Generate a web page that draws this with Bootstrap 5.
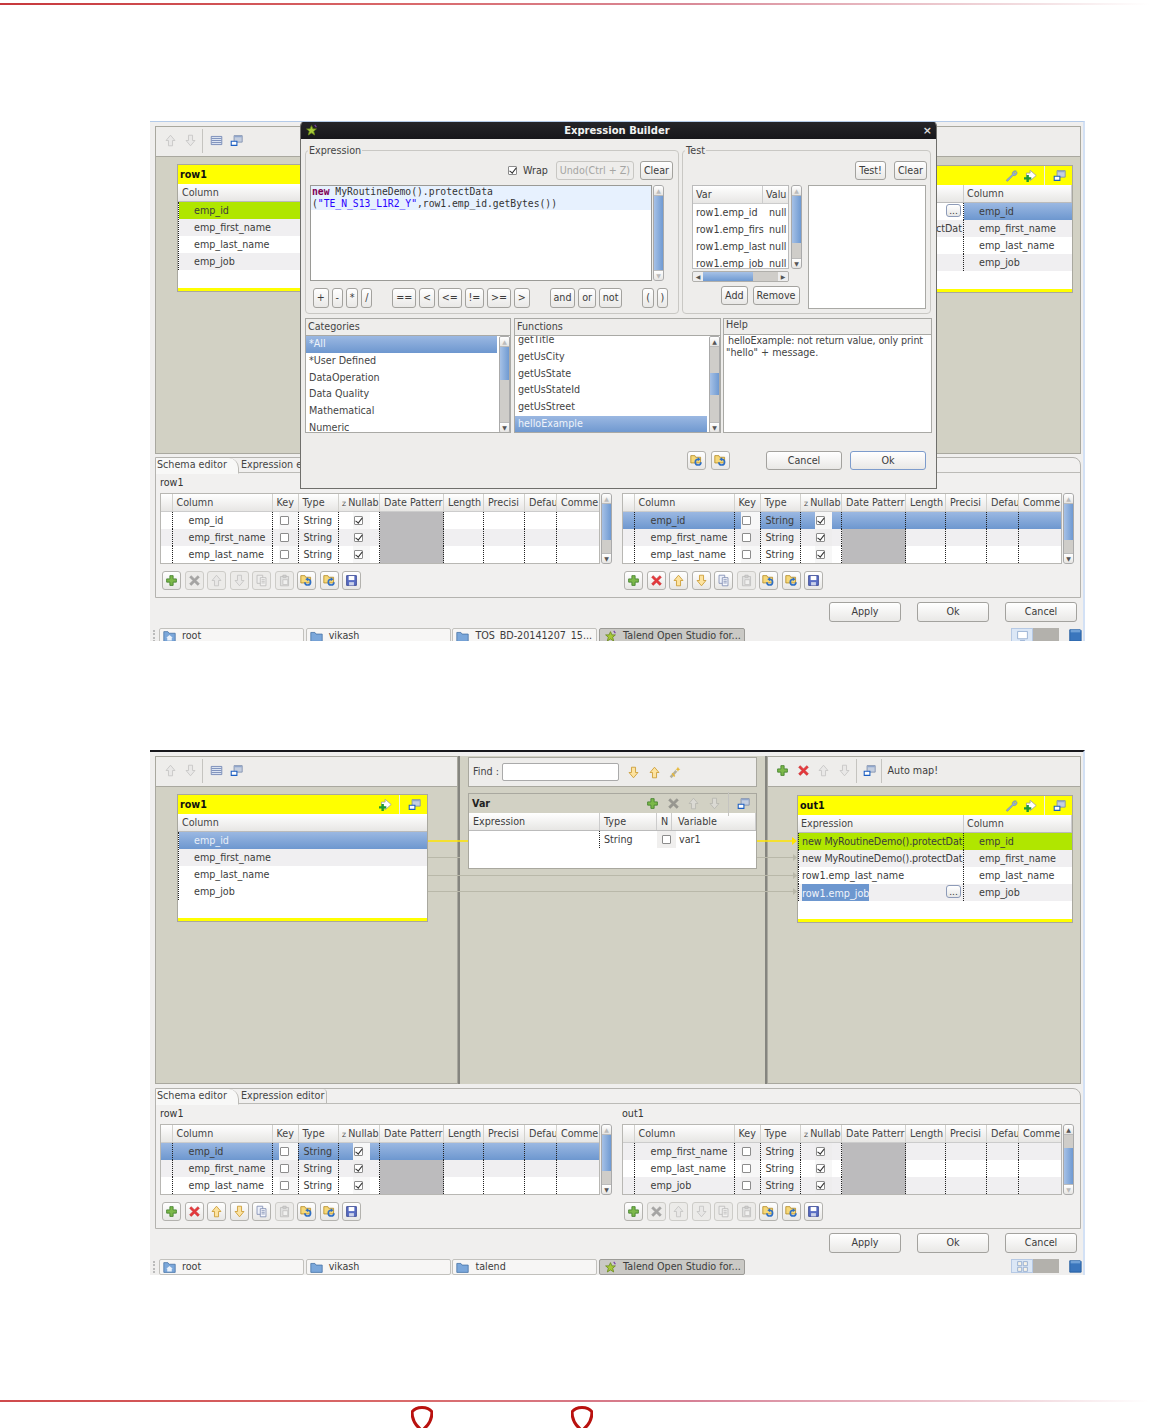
<!DOCTYPE html>
<html lang="en">
<head>
<meta charset="utf-8">
<title>Expression Builder</title>
<link href="https://cdn.jsdelivr.net/npm/bootstrap@5.3.0/dist/css/bootstrap.min.css" rel="stylesheet">
<style>
html,body{height:1428px;overflow:hidden}
body{margin:0;background:#fff;font:9.6px/1.2 "DejaVu Sans",sans-serif;color:#3c3c3c}
.ruleline{height:2px;background:linear-gradient(90deg,#c7383c,#d9686a 35%,#d98a98 60%,#f3dfe2 90%,#fff)}
.ruleline.top{margin-top:3px}
.ruleline.bot{margin-top:125px;background:linear-gradient(90deg,#cf4a4c,#d96a6a 35%,#d68095 60%,#f0d4da 88%,#fff)}
.logos{margin:4px 0 0 411px;gap:138px}
.logos svg{width:22px;height:26px}
.shot{position:relative;margin-left:150px;width:935px;overflow:hidden;background:#f0efee;border-right:2px solid #d3e1f5}
.shot-a{margin-top:116px;height:520px;padding-top:4px;border-top:1px solid #b4cbe9}
.shot-b{margin-top:109px;height:525px;padding-top:4px;border-top:2px solid #17171c}
.mapper{margin-left:5px;width:926px;height:328px}
.pane{background:#d2d1c4;border:1px solid #a9a89f;height:328px}
.pane-l{width:303px}
.pane-m{width:305px;padding:0 8px;border-width:0}
.pane-r{width:314px}
.vdiv{width:2px;background:#85857f}
.tbar{height:30px;padding-bottom:2px;background:#eeedeb;border-bottom:1px solid #a9a89f;padding-left:8px;gap:7px}
.tbar-r{gap:7.5px}
.vsep{width:1px;height:24px;background:#c5c4c0;margin:0 0 0 -2px}
.tbar-r .vsep{margin:0 -2px}
.ic{width:13px;height:13px;flex:none;display:block}
.dis{filter:grayscale(1) opacity(.5)}
.card.mcard{--bs-card-border-radius:0;--bs-card-bg:#fff;display:block;border:1px solid #a9a89f;border-radius:0;height:128px;overflow:hidden;color:#3c3c3c}
.mc-l{margin:7px 0 0 21px;width:251px}
.mc-r{margin:8px 0 0 29px;width:276px}
.mc-head{height:19px;background:#ff0;padding:0 6.5px 0 2px;font-weight:700;color:#111;gap:7.5px}
.mc-head .vsep{height:19px;background:#eee;margin:0}
.wr{margin-right:-2px}
.mc-col{height:18px;line-height:17px;background:linear-gradient(#fff,#e7e6e4);border-bottom:1px solid #bbb;padding-left:4px;color:#444}
.mc-col.xp-grid{padding-left:0}
.mc-rows{height:68px;border-left:1px dotted #222}
.mc-rw{height:17px;line-height:17px;padding-left:15px;white-space:nowrap}
.mc-yel{height:3px;margin-top:18px;background:#ff0}
.alt{background:#f0eff1}
.grn{background:#b0e600}
.sel{background:linear-gradient(#9bb8e2,#6d97cf)}
.sel.lt{color:#e9eff8}
.xp-grid{display:grid;grid-template-columns:166px 1fr}
.xp-h{border-right:1px solid #ccc;padding-left:3px}
.xp-c{height:17px;line-height:17px;padding-left:3px;white-space:nowrap;overflow:hidden;border-right:1px dotted #222;border-left:1px dotted #222}
.xp-c.rt{text-align:right;padding-right:1px}
.xp-c.tt{letter-spacing:-.12px}
.mc-cell{height:17px;line-height:17px;padding-left:15px}
.dots.btn{width:15px;height:13px;padding:0;font-size:9px;line-height:8px;border:1px solid #8d9bb8;border-radius:3px;background:linear-gradient(#fff,#e6e6e6);color:#333;margin:1px 2px 0 auto;display:block}
.hl{background:#6d97cf;color:#f2f5fb;padding:1px 0}
.find{height:30px;background:#eeedeb;border:1px solid #a9a89f;padding-left:4px;margin-top:1px;color:#444}
.find input.form-control{width:117px;height:18px;min-height:0;border:1px solid #aaa;border-radius:2px;padding:0;margin:0 8px 0 3px}
.find .ic{margin-right:8px}
.vbox{margin-top:6px;height:76px;background:#fff;border:1px solid #a9a89f}
.vb-head{height:19px;background:#d2d1c4;font-weight:700;color:#222;padding:0 6.5px 0 3px;gap:7.5px}
.vb-head .vsep{margin:0}
.vb-cols{display:grid;grid-template-columns:131px 57px 15px 1fr;height:18px;line-height:17px;background:linear-gradient(#fff,#e7e6e4);border-bottom:1px solid #bbb}
.vb-cols span{border-right:1px solid #ccc;padding-left:4px;overflow:hidden}
.vb-cols span:last-child{padding-left:6px}
.vb-row{display:grid;grid-template-columns:131px 57px 19px 1fr;height:17px;line-height:17px}
.vb-row span:first-child{border-right:1px dotted #222}
.vb-row span:nth-child(2){padding-left:4px}
.vb-row .kc{background:#f0efee}
.vn{padding-left:3px}
.wires{position:absolute;left:0;top:0;width:935px;height:525px;pointer-events:none}
.schema{margin:3px 0 0 5px;width:926px;height:141px;border:1px solid #b4b3af;border-radius:0 8px 0 0;background:#f1f0ef}
.shot-b .schema{margin-top:4px}
.nav.stabs{height:15px;border-bottom:1px solid #bcbbb7;flex-wrap:nowrap}
.stabs .nav-link{padding:0;height:15px;line-height:14px;color:#444;font-size:9.6px;white-space:nowrap}
.stabs .nav-link.active{width:83px;padding-left:1px;background:#f8f8f7;border-right:1px solid #bcbbb7;border-bottom:1px solid #f8f8f7;height:16px;border-radius:0 10px 0 0}
.stabs .nav-link.other{margin-left:1px;width:87px;padding-left:1px;border-right:1px solid #bcbbb7;border-radius:0 4px 0 0}
.sch-lbl{height:20px;line-height:20px;color:#333}
.sch-wrap{padding-left:4px;gap:10px}
.sch-side{width:452px}
.tgrid{width:441px;height:71px;overflow:hidden;background:#fff;border:1px solid #b8b7b3}
.thd,.trw{display:grid;grid-template-columns:11.5px 100px 26px 40.5px 41px 64px 40px 41px 32px 43px}
.thd{height:18px;line-height:17px;background:linear-gradient(#fff,#e7e6e4);border-bottom:1px solid #ccc;color:#444}
.thd span{border-right:1px solid #d2d1cd;padding-left:4px;white-space:nowrap;overflow:hidden}
.thd .nl{padding-left:3px}
.thd .nl small{font-size:6px;margin-right:2px}
.trw{height:17px;line-height:17px}
.trw>span{border-right:1px dotted #222;white-space:nowrap;overflow:hidden}
.trw>span:last-child{border-right:0}
.nmc{padding-left:16px}
.tyc{padding-left:5px}
.trw>.kcell{background:linear-gradient(#eeedee,#eeedee) 6px 0/19px 100% no-repeat;display:flex;align-items:center;padding-left:7px}
.trw>.ncell{background:linear-gradient(#eeedee,#eeedee) 14px 0/17px 100% no-repeat;display:flex;align-items:center;padding-left:14.500px}
.trw.white>.kcell,.trw.white>.ncell,.sel>.kcell,.sel>.ncell{background-image:linear-gradient(#f7f7f7,#f7f7f7)}
.dpc{background:#bcbbbd}
.sel .dpc{background:none}
.ck{display:block;width:9px;height:9px;border:1px solid #8c8c8c;border-radius:1px;background:#fff;flex:none}
.ck.on::after{content:"";display:block;width:3.5px;height:7px;margin:-1px 0 0 2.5px;border:solid #333;border-width:0 1.3px 1.3px 0;transform:rotate(38deg)}
.wrapck{margin-right:6px}
.sbar{width:11px;flex:none;background:#cfcdc9;border:1px solid #aaa;border-radius:3px;overflow:hidden;display:flex;flex-direction:column;justify-content:space-between}
.sbar-h{margin-left:1px}
.thumb{display:block;width:100%;background:linear-gradient(90deg,#a6c1e6,#6f9ad2);border:0;margin-bottom:auto}
.sb-a{display:block;height:10px;flex:none;background:linear-gradient(#fff,#e6e5e3);color:#555;font-size:6px;line-height:9px;text-align:center;border-bottom:1px solid #bbb}
.sb-a.end{border-top:1px solid #bbb;border-bottom:0}
.sb-a.off{color:#bbb}
.itools{margin:7px 0 0 2px;gap:3.5px}
.ibtn.btn{width:19px;height:19px;padding:0;border:1px solid #b3b2ae;border-radius:3px;background:linear-gradient(#fff,#e8e7e5);display:flex;align-items:center;justify-content:center}
.ibtn.off.btn{background:#ecebe9;border-color:#cdccc8;opacity:1}
.actions{height:30px;padding:4px 6px 0 0;gap:16px}
.gbtn.btn{font-size:9.6px;line-height:1;padding:0 3px;height:19px;border:1px solid #a3a29e;border-radius:3px;background:linear-gradient(#fff,#e9e8e6);color:#3c3c3c;white-space:nowrap;display:flex;align-items:center;justify-content:center}
.gbtn.off.btn{color:#a5a5a3;border-color:#c8c7c3;background:#eeedeb;opacity:1}
.bw72.btn{width:72px;height:20px}
.bw76.btn{width:76px}
.blue.btn{border-color:#7d9ccc}
.taskbar{height:16px;padding-left:9px;gap:1.7px;background:#f0efee;position:relative}
.tk.btn{width:145px;height:16px;padding:0 0 0 3px;font-size:9.6px;line-height:1;border:1px solid #c2c1bd;border-radius:2px;background:#f7f6f5;color:#3c3c3c;display:flex;align-items:center;gap:6px;white-space:nowrap;overflow:hidden}
.tk.on.btn{background:#cac9c5;width:146px;border-color:#9c9b97;padding-left:4px}
.tk-r{margin-left:auto;padding-right:1px;height:16px}
.pg1{width:22px;height:14px;background:#dbe7f6;border:1px solid #b6c9e4;display:flex;justify-content:center;align-items:center}
.pg2{width:26px;height:14px;background:#b3b1ac;margin-right:9px}
.tk-r .tr{width:14px;height:14px}
.dlg{position:absolute;left:150px;top:-1px;width:637px;height:368px;background:#eeedeb;border:1px solid #6f6f6b;border-top:0;border-radius:5px 5px 0 0;overflow:hidden}
.dlg-tt{height:18px;background:linear-gradient(#26262a,#17171b);color:#f2f2f2;font-weight:700;text-align:center;padding:0 4px}
.dlg-tt b{flex:1;font-size:10px;padding:2px 7px 0 0}
.dlg-x{color:#ddd;font-size:11px;font-weight:700;line-height:1}
.fsets{margin:11px 0 0 4px;gap:3px}
.fset{height:164px;border:1px solid #c9c8c4;border-radius:4px}
.f1{width:374px}.f2{width:249px}
.lgd{display:table;margin:-6px 0 0 2px;padding:0 1px;background:#eeedeb;color:#444;line-height:11px}
.fbar{height:19px;margin-top:5px;padding-right:5px}
.f2 .fbar{padding-right:3px}
.undo{margin:0 6px 0 8px;width:78px}
.edrow{margin:5px 0 0 4px;height:96px;gap:1px}
.editor{width:342px;background:#fff;border:1px solid #9a9a96;font:9.7px/12px "DejaVu Sans Mono",monospace;color:#333}
.edhl{background:#e7f1fe;height:24px;padding-left:1px;overflow:hidden}
.edhl div{height:12px;white-space:nowrap}
.kw{color:#7f0055;font-weight:700}
.st{color:#2a00ff}
.oprow{margin:7px 0 0 7px;gap:3px}
.oprow .btn.gbtn{height:20px;padding:0 2.85px}
.gp{margin-left:17px}
.f2body{margin:5px 0 0 9px;gap:6px}
.vt-wrap{width:110px}
.vt-top{gap:2px;height:84px}
.vt{width:97px;height:84px;overflow:hidden;background:#fff;border:1px solid #bbb}
.vt-h{display:grid;grid-template-columns:70px 1fr;height:18px;line-height:17px;background:linear-gradient(#fff,#e7e6e4);border-bottom:1px solid #ccc}
.vt-h span{padding-left:3px;overflow:hidden;white-space:nowrap}
.vt-h span:first-child{border-right:1px solid #ccc}
.vt-r{display:grid;grid-template-columns:73px 1fr;height:17px;line-height:17px}
.vt-r span{padding-left:3px;overflow:hidden;white-space:nowrap}
.hbar{width:97px;height:11px;margin-top:2px;background:#cfcdc9;border:1px solid #b0afab;border-radius:2px;overflow:hidden}
.hb-a{width:10px;background:#eee;font-size:6px;line-height:9px;text-align:center;color:#555}
.hb-t{width:50px;background:linear-gradient(#a6c1e6,#6f9ad2)}
.hb-e{margin-left:auto}
.addrow{margin:4px 0 0 29px;gap:5px}
.result{width:118px;height:124px;background:#fff;border:1px solid #a9a9a5}
.lists{margin:4px 0 0 4px;gap:3px;height:115px}
.lpanel{border:1px solid #a9a9a5;background:#fff;height:115px;overflow:hidden}
.lp-c{width:206px}.lp-f{width:207px;margin-right:-1px}.lp-h{width:209px}
.lp-hd{height:17px;line-height:16px;background:#eeedeb;border-bottom:1px solid #a9a9a5;padding-left:2px;color:#444}
.lp-h .lp-hd{height:16px;line-height:12px}
.lp-body{height:97px;overflow:hidden}
.list-group.plist{--bs-list-group-border-width:0;--bs-list-group-item-padding-x:3px;--bs-list-group-item-padding-y:0;--bs-list-group-color:#444;--bs-list-group-bg:transparent;flex:1;border-radius:0;min-width:0;font-size:9.6px}
.plist .list-group-item{height:16.8px;line-height:16.8px;white-space:nowrap;flex:none}
.plist .list-group-item.on{background:linear-gradient(#9bb8e2,#6d97cf);color:#eef3fa}
.pl-scr{margin-top:-4px}
.lp-body .sbar{margin-left:2px;border-radius:2px}
.helpbox{padding:0 2px;line-height:12px;color:#444}
.helpbox i{font-style:normal;padding-left:2px;letter-spacing:-.13px;white-space:nowrap}
.dlg-ft{margin-top:18px;padding-right:10px;gap:5px}
.dlg-ft .sp{width:26px}
.gap8{margin-left:3px}
.grip{position:absolute;left:3px;top:2px;width:4px;height:12px;border-left:2px dotted #bbb}
</style>
</head>
<body>
<svg width="0" height="0" class="position-absolute" aria-hidden="true">
<symbol id="i-plus" viewBox="0 0 16 16"><path d="M6 2h4v4h4v4h-4v4H6v-4H2V6h4z" fill="#7cb84a" stroke="#3f7f2a"/></symbol>
<symbol id="i-x" viewBox="0 0 16 16"><path d="M4 2 8 6l4-4 2 2-4 4 4 4-2 2-4-4-4 4-2-2 4-4-4-4z" fill="#e5383c" stroke="#c42a2a" stroke-width=".7"/></symbol>
<symbol id="i-up" viewBox="0 0 16 16"><path d="M8 1.500 13.500 8h-3v6.500h-5V8h-3z" fill="#fde3a0" stroke="#c9982c"/></symbol>
<symbol id="i-down" viewBox="0 0 16 16"><path d="M8 14.500 13.500 8h-3V1.500h-5V8h-3z" fill="#fde3a0" stroke="#c9982c"/></symbol>
<symbol id="i-copy" viewBox="0 0 16 16"><path d="M2.500 1.500h7v10h-7z" fill="#eef2fa" stroke="#7c8ab0"/><path d="M6.500 4.500h7v10h-7z" fill="#f6f8fd" stroke="#7c8ab0"/><path d="M8 7h4M8 9h4M8 11h4" stroke="#7c8ab0"/></symbol>
<symbol id="i-paste" viewBox="0 0 16 16"><path d="M3 3h10v11.500H3z" fill="#d5d5d2" stroke="#909090"/><path d="M6 1.500h4V4H6z" fill="#bbb" stroke="#888"/><path d="M6 7h6v6H6z" fill="#f4f4f4" stroke="#999"/></symbol>
<symbol id="i-imp" viewBox="0 0 16 16"><path d="M1 2h5l1 2h6v7H1z" fill="#f6d878" stroke="#b58a24"/><path d="M6 10a3.500 3.500 0 1 0 3.500-3.500" fill="none" stroke="#2f6fc4" stroke-width="2"/><path d="M10 4v5L6.500 6.500z" fill="#2f6fc4"/></symbol>
<symbol id="i-exp" viewBox="0 0 16 16"><path d="M1 2h5l1 2h6v7H1z" fill="#f6d878" stroke="#b58a24"/><path d="M13.500 10a3.500 3.500 0 1 1-3.500-3.500" fill="none" stroke="#2f6fc4" stroke-width="2"/><path d="M9.500 4v5L13 6.500z" fill="#2f6fc4"/></symbol>
<symbol id="i-save" viewBox="0 0 16 16"><path d="M2 2h12v12H2z" fill="#5a6ec4" stroke="#2f3d8c"/><path d="M4.500 2.500h7v5h-7z" fill="#fff"/><path d="M5 10h6v4H5z" fill="#cbd2ea"/></symbol>
<symbol id="i-win" viewBox="0 0 16 16"><path d="M5 2h10v8H5z" fill="#c4cedf" stroke="#7b8cab"/><path d="M5.500 2.500h9v1.500h-9z" fill="#8fa6cc"/><path d="M1.500 9h7v5h-7z" fill="#fff" stroke="#1b5ec2" stroke-width="1.300"/></symbol>
<symbol id="i-tbl" viewBox="0 0 16 16"><path d="M1.500 3h13v10h-13z" fill="#dde5f2" stroke="#6a7fb0"/><path d="M2 5.500h12M2 8h12M2 10.500h12" stroke="#6a7fb0"/></symbol>
<symbol id="i-wrench" viewBox="0 0 16 16"><path d="M14 2.500a3.600 3.600 0 0 0-5 4.300L2 13.200c-.8 1.300.5 2.400 1.600 1.600L10 8a3.600 3.600 0 0 0 4.600-4.600l-2.300 2.100-1.500-1.400z" fill="#93acd6" stroke="#6e88b8" stroke-width=".7"/></symbol>
<symbol id="i-arrp" viewBox="0 0 16 16"><path d="M7.500 1.500 15 8l-7.500 6.500V11H3V5h4.500z" fill="#fff" stroke="#a0a0a0"/><path d="M3 7.500h3V10h3v3H6v3H3v-3H0v-3h3z" fill="#1f9a33"/></symbol>
<symbol id="i-wand" viewBox="0 0 16 16"><path d="M2 14 9 6" stroke="#b3b09c" stroke-width="3"/><path d="M4 9l3 4" stroke="#e7b93a" stroke-width="2"/><path d="M11 1l1 2 2 1-2 1-1 2-1-2-2-1 2-1z" fill="#e7b93a"/></symbol>
<symbol id="i-star" viewBox="0 0 16 16"><path d="M8 2l1.800 4H14l-3.300 2.900 1.200 4.600L8 11l-3.900 2.500 1.200-4.600L2 6h4.200z" fill="#a6c838" stroke="#6a8a1c"/><path d="M12 1l2 3" stroke="#7a3fa8" stroke-width="1.500"/></symbol>
<symbol id="i-folder" viewBox="0 0 16 16"><path d="M1 3h5l1.500 2H15v9H1z" fill="#7ba7da" stroke="#4a75a8"/></symbol>
<symbol id="i-home" viewBox="0 0 16 16"><path d="M1 2h5l1.500 2H15v10H1z" fill="#7ba7da" stroke="#4a75a8"/><path d="M8 6l4 3.500h-1.200V13H5.200V9.500H4z" fill="#eaf1fa"/></symbol>
<symbol id="i-trash" viewBox="0 0 16 16"><path d="M2 2h12l1 1v12H2z" fill="#3a76bd" stroke="#215a9e"/><path d="M3 2h11v3H3z" fill="#6fa0d6"/></symbol>
<symbol id="i-mon" viewBox="0 0 16 16"><path d="M2 3h12v9H2z" fill="#fff" stroke="#8da6cc"/><path d="M5 14h6" stroke="#8da6cc"/></symbol>
<symbol id="i-grid" viewBox="0 0 16 16"><path d="M2 2h5v5H2zM9 2h5v5H9zM2 9h5v5H2zM9 9h5v5H9z" fill="#f7f3e8" stroke="#8da6cc"/></symbol>
</svg>

<div class="ruleline top"></div>

<!-- first screenshot -->
<section class="shot shot-a">
  <div class="mapper d-flex">
    <div class="pane pane-l">
      <div class="tbar d-flex align-items-center">
        <svg class="ic dis"><use href="#i-up"/></svg><svg class="ic dis"><use href="#i-down"/></svg>
        <span class="vsep"></span>
        <svg class="ic"><use href="#i-tbl"/></svg><svg class="ic"><use href="#i-win"/></svg>
      </div>
      <div class="card mcard mc-l">
        <div class="mc-head d-flex align-items-center"><span>row1</span></div>
        <div class="mc-col">Column</div>
        <div class="mc-rows">
          <div class="mc-rw grn">emp_id</div><div class="mc-rw alt">emp_first_name</div><div class="mc-rw">emp_last_name</div><div class="mc-rw alt">emp_job</div>
        </div>
        <div class="mc-yel"></div>
      </div>
    </div>
    <div class="vdiv"></div>
    <div class="pane pane-m"></div>
    <div class="vdiv"></div>
    <div class="pane pane-r">
      <div class="tbar d-flex align-items-center"></div>
      <div class="card mcard mc-r">
        <div class="mc-head d-flex align-items-center"><span class="me-auto"></span><svg class="ic wr"><use href="#i-wrench"/></svg><svg class="ic"><use href="#i-arrp"/></svg><span class="vsep"></span><svg class="ic"><use href="#i-win"/></svg></div>
        <div class="mc-col xp-grid"><span class="xp-h"></span><span class="xp-h">Column</span></div>
        <div class="xp-grid">
          <div class="xp-c"><button class="btn dots">...</button></div><div class="mc-cell sel">emp_id</div>
          <div class="xp-c alt rt">ctDat</div><div class="mc-cell alt">emp_first_name</div>
          <div class="xp-c"></div><div class="mc-cell">emp_last_name</div>
          <div class="xp-c alt"></div><div class="mc-cell alt">emp_job</div>
        </div>
        <div class="mc-yel"></div>
      </div>
    </div>
  </div>

  <div class="schema">
    <ul class="nav stabs">
      <li class="nav-item"><a class="nav-link active" href="#">Schema editor</a></li>
      <li class="nav-item"><a class="nav-link other" href="#">Expression e</a></li>
    </ul>
    <div class="sch-wrap d-flex">
      <div class="sch-side">
        <div class="sch-lbl">row1</div>
        <div class="d-flex gap-0">
          <div class="tgrid">
            <div class="thd"><span></span><span>Column</span><span>Key</span><span>Type</span><span class="nl"><small>Z</small>Nullab</span><span>Date Patterr</span><span>Length</span><span>Precisi</span><span>Defau</span><span>Comme</span></div>
            <div class="trw white"><span></span><span class="nmc">emp_id</span><span class="kcell"><b class="ck"></b></span><span class="tyc">String</span><span class="ncell"><b class="ck on"></b></span><span class="dpc"></span><span></span><span></span><span></span><span></span></div>
            <div class="trw alt"><span></span><span class="nmc">emp_first_name</span><span class="kcell"><b class="ck"></b></span><span class="tyc">String</span><span class="ncell"><b class="ck on"></b></span><span class="dpc"></span><span></span><span></span><span></span><span></span></div>
            <div class="trw white"><span></span><span class="nmc">emp_last_name</span><span class="kcell"><b class="ck"></b></span><span class="tyc">String</span><span class="ncell"><b class="ck on"></b></span><span class="dpc"></span><span></span><span></span><span></span><span></span></div>
          </div>
          <div class="sbar sbar-h"><span class="sb-a off">&#9650;</span><span class="thumb" style="height:36px"></span><span class="sb-a end">&#9660;</span></div>
        </div>
        <div class="itools d-flex">
          <button class="btn ibtn"><svg class="ic"><use href="#i-plus"/></svg></button><button class="btn ibtn off"><svg class="ic dis"><use href="#i-x"/></svg></button><button class="btn ibtn off"><svg class="ic dis"><use href="#i-up"/></svg></button><button class="btn ibtn off"><svg class="ic dis"><use href="#i-down"/></svg></button><button class="btn ibtn off"><svg class="ic dis"><use href="#i-copy"/></svg></button><button class="btn ibtn off"><svg class="ic dis"><use href="#i-paste"/></svg></button><button class="btn ibtn"><svg class="ic"><use href="#i-imp"/></svg></button><button class="btn ibtn"><svg class="ic"><use href="#i-exp"/></svg></button><button class="btn ibtn"><svg class="ic"><use href="#i-save"/></svg></button>
        </div>
      </div>
      <div class="sch-side">
        <div class="sch-lbl"></div>
        <div class="d-flex">
          <div class="tgrid">
            <div class="thd"><span></span><span>Column</span><span>Key</span><span>Type</span><span class="nl"><small>Z</small>Nullab</span><span>Date Patterr</span><span>Length</span><span>Precisi</span><span>Defau</span><span>Comme</span></div>
            <div class="trw sel"><span></span><span class="nmc">emp_id</span><span class="kcell"><b class="ck"></b></span><span class="tyc">String</span><span class="ncell"><b class="ck on"></b></span><span class="dpc"></span><span></span><span></span><span></span><span></span></div>
            <div class="trw alt"><span></span><span class="nmc">emp_first_name</span><span class="kcell"><b class="ck"></b></span><span class="tyc">String</span><span class="ncell"><b class="ck on"></b></span><span class="dpc"></span><span></span><span></span><span></span><span></span></div>
            <div class="trw white"><span></span><span class="nmc">emp_last_name</span><span class="kcell"><b class="ck"></b></span><span class="tyc">String</span><span class="ncell"><b class="ck on"></b></span><span class="dpc"></span><span></span><span></span><span></span><span></span></div>
          </div>
          <div class="sbar sbar-h"><span class="sb-a off">&#9650;</span><span class="thumb" style="height:36px"></span><span class="sb-a end">&#9660;</span></div>
        </div>
        <div class="itools d-flex">
          <button class="btn ibtn"><svg class="ic"><use href="#i-plus"/></svg></button><button class="btn ibtn"><svg class="ic"><use href="#i-x"/></svg></button><button class="btn ibtn"><svg class="ic"><use href="#i-up"/></svg></button><button class="btn ibtn"><svg class="ic"><use href="#i-down"/></svg></button><button class="btn ibtn"><svg class="ic"><use href="#i-copy"/></svg></button><button class="btn ibtn off"><svg class="ic dis"><use href="#i-paste"/></svg></button><button class="btn ibtn"><svg class="ic"><use href="#i-imp"/></svg></button><button class="btn ibtn"><svg class="ic"><use href="#i-exp"/></svg></button><button class="btn ibtn"><svg class="ic"><use href="#i-save"/></svg></button>
        </div>
      </div>
    </div>
  </div>

  <div class="actions d-flex justify-content-end"><button class="btn gbtn bw72">Apply</button><button class="btn gbtn bw72">Ok</button><button class="btn gbtn bw72">Cancel</button></div>

  <div class="taskbar d-flex">
    <span class="grip"></span>
    <button class="btn tk"><svg class="ic"><use href="#i-home"/></svg>root</button>
    <button class="btn tk"><svg class="ic"><use href="#i-folder"/></svg>vikash</button>
    <button class="btn tk"><svg class="ic"><use href="#i-folder"/></svg>TOS_BD-20141207_15...</button>
    <button class="btn tk on"><svg class="ic"><use href="#i-star"/></svg>Talend Open Studio for...</button>
    <div class="tk-r d-flex"><span class="pg1"><svg class="ic"><use href="#i-mon"/></svg></span><span class="pg2"></span><svg class="ic tr"><use href="#i-trash"/></svg></div>
  </div>

  <!-- dialog over the mapper -->
  <div class="dlg">
    <div class="dlg-tt d-flex align-items-center"><svg class="ic"><use href="#i-star"/></svg><b>Expression Builder</b><span class="dlg-x">&times;</span></div>
    <div class="fsets d-flex">
      <div class="fset f1">
        <span class="lgd">Expression</span>
        <div class="fbar d-flex justify-content-end align-items-center">
          <b class="ck on wrapck"></b><span>Wrap</span>
          <button class="btn gbtn off undo">Undo(Ctrl + Z)</button>
          <button class="btn gbtn">Clear</button>
        </div>
        <div class="edrow d-flex">
          <div class="editor"><div class="edhl"><div><span class="kw">new</span> MyRoutineDemo().protectData</div><div>(<span class="st">"TE_N_S13_L1R2_Y"</span>,row1.emp_id.getBytes())</div></div></div>
          <div class="sbar"><span class="sb-a off">&#9650;</span><span class="thumb" style="height:74px"></span><span class="sb-a end off">&#9660;</span></div>
        </div>
        <div class="oprow d-flex">
          <button class="btn gbtn">+</button><button class="btn gbtn">-</button><button class="btn gbtn">*</button><button class="btn gbtn">/</button>
          <button class="btn gbtn gp">==</button><button class="btn gbtn">&lt;</button><button class="btn gbtn">&lt;=</button><button class="btn gbtn">!=</button><button class="btn gbtn">&gt;=</button><button class="btn gbtn">&gt;</button>
          <button class="btn gbtn gp">and</button><button class="btn gbtn">or</button><button class="btn gbtn">not</button>
          <button class="btn gbtn gp">(</button><button class="btn gbtn">)</button>
        </div>
      </div>
      <div class="fset f2">
        <span class="lgd">Test</span>
        <div class="fbar d-flex justify-content-end align-items-center gap-2">
          <button class="btn gbtn">Test!</button><button class="btn gbtn">Clear</button>
        </div>
        <div class="f2body d-flex">
          <div class="vt-wrap">
            <div class="vt-top d-flex">
              <div class="vt">
                <div class="vt-h"><span>Var</span><span>Valu</span></div>
                <div class="vt-r"><span>row1.emp_id</span><span>null</span></div>
                <div class="vt-r"><span>row1.emp_firs</span><span>null</span></div>
                <div class="vt-r"><span>row1.emp_last</span><span>null</span></div>
                <div class="vt-r"><span>row1.emp_job</span><span>null</span></div>
              </div>
              <div class="sbar"><span class="sb-a off">&#9650;</span><span class="thumb" style="height:47px"></span><span class="sb-a end">&#9660;</span></div>
            </div>
            <div class="hbar d-flex"><span class="hb-a">&#9664;</span><span class="hb-t"></span><span class="hb-a hb-e">&#9654;</span></div>
            <div class="addrow d-flex"><button class="btn gbtn">Add</button><button class="btn gbtn">Remove</button></div>
          </div>
          <div class="result"></div>
        </div>
      </div>
    </div>
    <div class="lists d-flex">
      <div class="lpanel lp-c">
        <div class="lp-hd">Categories</div>
        <div class="lp-body d-flex">
          <ul class="list-group plist">
            <li class="list-group-item on">*All</li><li class="list-group-item">*User Defined</li><li class="list-group-item">DataOperation</li><li class="list-group-item">Data Quality</li><li class="list-group-item">Mathematical</li><li class="list-group-item">Numeric</li>
          </ul>
          <div class="sbar"><span class="sb-a off">&#9650;</span><span class="thumb" style="height:33px"></span><span class="sb-a end">&#9660;</span></div>
        </div>
      </div>
      <div class="lpanel lp-f">
        <div class="lp-hd">Functions</div>
        <div class="lp-body d-flex">
          <ul class="list-group plist pl-scr">
            <li class="list-group-item">getTitle</li><li class="list-group-item">getUsCity</li><li class="list-group-item">getUsState</li><li class="list-group-item">getUsStateId</li><li class="list-group-item">getUsStreet</li><li class="list-group-item on">helloExample</li>
          </ul>
          <div class="sbar"><span class="sb-a">&#9650;</span><span class="thumb" style="height:22px;margin-top:26px"></span><span class="sb-a end">&#9660;</span></div>
        </div>
      </div>
      <div class="lpanel lp-h">
        <div class="lp-hd">Help</div>
        <div class="helpbox"><i>helloExample: not return value, only print</i><br>"hello" + message.</div>
      </div>
    </div>
    <div class="dlg-ft d-flex justify-content-end">
      <button class="btn ibtn"><svg class="ic"><use href="#i-exp"/></svg></button><button class="btn ibtn"><svg class="ic"><use href="#i-imp"/></svg></button>
      <span class="sp"></span>
      <button class="btn gbtn bw76">Cancel</button><button class="btn gbtn bw76 blue gap8">Ok</button>
    </div>
  </div>
</section>

<!-- second screenshot -->
<section class="shot shot-b">
  <div class="mapper d-flex">
    <div class="pane pane-l">
      <div class="tbar d-flex align-items-center">
        <svg class="ic dis"><use href="#i-up"/></svg><svg class="ic dis"><use href="#i-down"/></svg>
        <span class="vsep"></span>
        <svg class="ic"><use href="#i-tbl"/></svg><svg class="ic"><use href="#i-win"/></svg>
      </div>
      <div class="card mcard mc-l">
        <div class="mc-head d-flex align-items-center"><span class="me-auto">row1</span><svg class="ic"><use href="#i-arrp"/></svg><span class="vsep"></span><svg class="ic"><use href="#i-win"/></svg></div>
        <div class="mc-col">Column</div>
        <div class="mc-rows">
          <div class="mc-rw sel lt">emp_id</div><div class="mc-rw alt">emp_first_name</div><div class="mc-rw">emp_last_name</div><div class="mc-rw">emp_job</div>
        </div>
        <div class="mc-yel"></div>
      </div>
    </div>
    <div class="vdiv"></div>
    <div class="pane pane-m">
      <div class="find d-flex align-items-center"><span>Find :</span><input class="form-control" type="text" aria-label="Find"><svg class="ic"><use href="#i-down"/></svg><svg class="ic"><use href="#i-up"/></svg><svg class="ic"><use href="#i-wand"/></svg></div>
      <div class="vbox">
        <div class="vb-head d-flex align-items-center"><span class="me-auto">Var</span><svg class="ic"><use href="#i-plus"/></svg><svg class="ic dis"><use href="#i-x"/></svg><svg class="ic dis"><use href="#i-up"/></svg><svg class="ic dis"><use href="#i-down"/></svg><span class="vsep"></span><svg class="ic"><use href="#i-win"/></svg></div>
        <div class="vb-cols"><span>Expression</span><span>Type</span><span>N</span><span>Variable</span></div>
        <div class="vb-row"><span></span><span>String</span><span class="kc d-flex align-items-center justify-content-center"><b class="ck"></b></span><span class="vn">var1</span></div>
      </div>
    </div>
    <div class="vdiv"></div>
    <div class="pane pane-r">
      <div class="tbar tbar-r d-flex align-items-center">
        <svg class="ic"><use href="#i-plus"/></svg><svg class="ic"><use href="#i-x"/></svg><svg class="ic dis"><use href="#i-up"/></svg><svg class="ic dis"><use href="#i-down"/></svg>
        <span class="vsep"></span><svg class="ic"><use href="#i-win"/></svg><span class="vsep"></span><span>Auto map!</span>
      </div>
      <div class="card mcard mc-r">
        <div class="mc-head d-flex align-items-center"><span class="me-auto">out1</span><svg class="ic wr"><use href="#i-wrench"/></svg><svg class="ic"><use href="#i-arrp"/></svg><span class="vsep"></span><svg class="ic"><use href="#i-win"/></svg></div>
        <div class="mc-col xp-grid"><span class="xp-h">Expression</span><span class="xp-h">Column</span></div>
        <div class="xp-grid">
          <div class="xp-c tt grn">new MyRoutineDemo().protectDat</div><div class="mc-cell grn">emp_id</div>
          <div class="xp-c tt alt">new MyRoutineDemo().protectDat</div><div class="mc-cell alt">emp_first_name</div>
          <div class="xp-c">row1.emp_last_name</div><div class="mc-cell">emp_last_name</div>
          <div class="xp-c alt d-flex"><span class="hl">row1.emp_job</span><button class="btn dots">...</button></div><div class="mc-cell alt">emp_job</div>
        </div>
        <div class="mc-yel"></div>
      </div>
    </div>
  </div>

  <div class="schema">
    <ul class="nav stabs">
      <li class="nav-item"><a class="nav-link active" href="#">Schema editor</a></li>
      <li class="nav-item"><a class="nav-link other" href="#">Expression editor</a></li>
    </ul>
    <div class="sch-wrap d-flex">
      <div class="sch-side">
        <div class="sch-lbl">row1</div>
        <div class="d-flex">
          <div class="tgrid">
            <div class="thd"><span></span><span>Column</span><span>Key</span><span>Type</span><span class="nl"><small>Z</small>Nullab</span><span>Date Patterr</span><span>Length</span><span>Precisi</span><span>Defau</span><span>Comme</span></div>
            <div class="trw sel"><span></span><span class="nmc">emp_id</span><span class="kcell"><b class="ck"></b></span><span class="tyc">String</span><span class="ncell"><b class="ck on"></b></span><span class="dpc"></span><span></span><span></span><span></span><span></span></div>
            <div class="trw alt"><span></span><span class="nmc">emp_first_name</span><span class="kcell"><b class="ck"></b></span><span class="tyc">String</span><span class="ncell"><b class="ck on"></b></span><span class="dpc"></span><span></span><span></span><span></span><span></span></div>
            <div class="trw white"><span></span><span class="nmc">emp_last_name</span><span class="kcell"><b class="ck"></b></span><span class="tyc">String</span><span class="ncell"><b class="ck on"></b></span><span class="dpc"></span><span></span><span></span><span></span><span></span></div>
          </div>
          <div class="sbar sbar-h"><span class="sb-a off">&#9650;</span><span class="thumb" style="height:36px"></span><span class="sb-a end">&#9660;</span></div>
        </div>
        <div class="itools d-flex">
          <button class="btn ibtn"><svg class="ic"><use href="#i-plus"/></svg></button><button class="btn ibtn"><svg class="ic"><use href="#i-x"/></svg></button><button class="btn ibtn"><svg class="ic"><use href="#i-up"/></svg></button><button class="btn ibtn"><svg class="ic"><use href="#i-down"/></svg></button><button class="btn ibtn"><svg class="ic"><use href="#i-copy"/></svg></button><button class="btn ibtn off"><svg class="ic dis"><use href="#i-paste"/></svg></button><button class="btn ibtn"><svg class="ic"><use href="#i-imp"/></svg></button><button class="btn ibtn"><svg class="ic"><use href="#i-exp"/></svg></button><button class="btn ibtn"><svg class="ic"><use href="#i-save"/></svg></button>
        </div>
      </div>
      <div class="sch-side">
        <div class="sch-lbl">out1</div>
        <div class="d-flex">
          <div class="tgrid">
            <div class="thd"><span></span><span>Column</span><span>Key</span><span>Type</span><span class="nl"><small>Z</small>Nullab</span><span>Date Patterr</span><span>Length</span><span>Precisi</span><span>Defau</span><span>Comme</span></div>
            <div class="trw alt"><span></span><span class="nmc">emp_first_name</span><span class="kcell"><b class="ck"></b></span><span class="tyc">String</span><span class="ncell"><b class="ck on"></b></span><span class="dpc"></span><span></span><span></span><span></span><span></span></div>
            <div class="trw white"><span></span><span class="nmc">emp_last_name</span><span class="kcell"><b class="ck"></b></span><span class="tyc">String</span><span class="ncell"><b class="ck on"></b></span><span class="dpc"></span><span></span><span></span><span></span><span></span></div>
            <div class="trw alt"><span></span><span class="nmc">emp_job</span><span class="kcell"><b class="ck"></b></span><span class="tyc">String</span><span class="ncell"><b class="ck on"></b></span><span class="dpc"></span><span></span><span></span><span></span><span></span></div>
          </div>
          <div class="sbar sbar-h"><span class="sb-a">&#9650;</span><span class="thumb" style="height:36px;margin-top:13px"></span><span class="sb-a end off">&#9660;</span></div>
        </div>
        <div class="itools d-flex">
          <button class="btn ibtn"><svg class="ic"><use href="#i-plus"/></svg></button><button class="btn ibtn off"><svg class="ic dis"><use href="#i-x"/></svg></button><button class="btn ibtn off"><svg class="ic dis"><use href="#i-up"/></svg></button><button class="btn ibtn off"><svg class="ic dis"><use href="#i-down"/></svg></button><button class="btn ibtn off"><svg class="ic dis"><use href="#i-copy"/></svg></button><button class="btn ibtn off"><svg class="ic dis"><use href="#i-paste"/></svg></button><button class="btn ibtn"><svg class="ic"><use href="#i-imp"/></svg></button><button class="btn ibtn"><svg class="ic"><use href="#i-exp"/></svg></button><button class="btn ibtn"><svg class="ic"><use href="#i-save"/></svg></button>
        </div>
      </div>
    </div>
  </div>

  <div class="actions d-flex justify-content-end"><button class="btn gbtn bw72">Apply</button><button class="btn gbtn bw72">Ok</button><button class="btn gbtn bw72">Cancel</button></div>

  <div class="taskbar d-flex">
    <span class="grip"></span>
    <button class="btn tk"><svg class="ic"><use href="#i-home"/></svg>root</button>
    <button class="btn tk"><svg class="ic"><use href="#i-folder"/></svg>vikash</button>
    <button class="btn tk"><svg class="ic"><use href="#i-folder"/></svg>talend</button>
    <button class="btn tk on"><svg class="ic"><use href="#i-star"/></svg>Talend Open Studio for...</button>
    <div class="tk-r d-flex"><span class="pg1"><svg class="ic"><use href="#i-grid"/></svg></span><span class="pg2"></span><svg class="ic tr"><use href="#i-trash"/></svg></div>
  </div>

  <!-- mapping wires drawn over the panes -->
  <svg class="wires" viewBox="0 0 935 525" aria-hidden="true">
    <g stroke="#b9b8a9" fill="none">
      <path d="M278 105.500H310M607 105.500H647M278 123.500H647M278 139.500H647"/>
    </g>
    <g fill="#b9b8a9"><path d="M643 102l4 3.500-4 3.500zM643 120l4 3.500-4 3.500zM643 136l4 3.500-4 3.500z"/></g>
    <path d="M278 89H318M607 89H643" stroke="#ffe500" stroke-width="1.500" fill="none"/>
    <path d="M642 85l5 4-5 4z" fill="#ffe500"/>
  </svg>
</section>

<div class="ruleline bot"></div>
<div class="logos d-flex">
  <svg viewBox="0 0 22 26" aria-hidden="true"><path d="M11 1.500C15.500 1.500 19 3 21 6 21 13 17 20 11 24.500 5 20 1 13 1 6 3 3 6.500 1.500 11 1.500Z" fill="#fff" stroke="#b9120f" stroke-width="3"/></svg>
  <svg viewBox="0 0 22 26" aria-hidden="true"><path d="M11 1.500C15.500 1.500 19 3 21 6 21 13 17 20 11 24.500 5 20 1 13 1 6 3 3 6.500 1.500 11 1.500Z" fill="#fff" stroke="#b9120f" stroke-width="3"/></svg>
</div>
</body>
</html>
